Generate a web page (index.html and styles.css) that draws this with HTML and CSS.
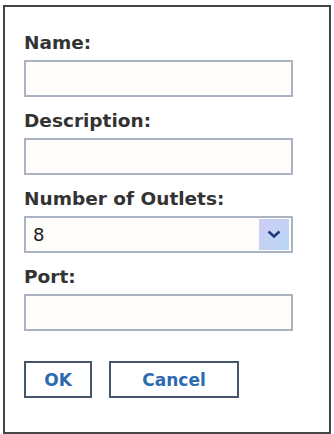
FILE: index.html
```html
<!DOCTYPE html>
<html lang="en">
<head>
    <meta charset="UTF-8">
    <meta name="viewport" content="width=device-width, initial-scale=1.0">
    <title>Outlet Properties</title>
    <link rel="stylesheet" href="styles.css">
</head>
<body>
    <div id="dialog">
        <div class="field">
            <label class="field-label" for="name">Name:</label>
            <input id="name" class="text-box" type="text">
        </div>
        <div class="field">
            <label class="field-label" for="description">Description:</label>
            <input id="description" class="text-box" type="text">
        </div>
        <div class="field">
            <label class="field-label" for="outlets">Number of Outlets:</label>
            <div id="outlets" class="select-box">
                <span class="select-value">8</span>
                <span class="select-arrow">
                    <svg width="14" height="9" viewBox="0 0 14 9">
                        <path d="M1.5 1.5 L7 6.5 L12.5 1.5" fill="none" stroke="#1f3c78" stroke-width="2.6"/>
                    </svg>
                </span>
            </div>
        </div>
        <div class="field">
            <label class="field-label" for="port">Port:</label>
            <input id="port" class="text-box" type="text">
        </div>
        <div id="buttons">
            <button class="btn btn-ok">OK</button>
            <button class="btn btn-cancel">Cancel</button>
        </div>
    </div>
</body>
</html>
```

FILE: styles.css
```css
:root{
    --frame-color: #454545;
    --label-color: #333333;
    --box-border: #a9b3c1;
    --button-border: #46566a;
    --button-text: #2e6ab0;
}
html,body {
    margin: 0;
    padding: 0;
    background-color: #ffffff;
    font-family: "DejaVu Sans", sans-serif;
}

/* ==========
    Frame
    ========= */
#dialog{
    box-sizing: border-box;
    width: 328px;
    height: 429px;
    margin: 5px 0 0 3px;
    border: 2px solid var(--frame-color);
    padding: 25px 0 0 19px;
    display: flex;
    flex-direction: column;
    gap: 13px;
}

/* ==========
    Fields
    ========= */
.field{
    display: flex;
    flex-direction: column;
    gap: 6px;
}
.field-label{
    font-size: 18.5px;
    font-weight: bold;
    line-height: 22px;
    color: var(--label-color);
}
.text-box, .select-box{
    box-sizing: border-box;
    width: 269px;
    height: 37px;
    margin: 0;
    border: 2px solid var(--box-border);
    background-color: #fffdfb;
}
.select-box{
    display: flex;
    align-items: center;
    justify-content: space-between;
    padding: 0 2px 0 7px;
}
.select-value{
    font-size: 18px;
    color: #1a1a1a;
}
.select-arrow{
    width: 30px;
    height: 31px;
    display: flex;
    align-items: center;
    justify-content: center;
    background: linear-gradient(135deg, #cfcdf4, #b9d6f6);
}

/* ==========
    Buttons
    ========= */
#buttons{
    display: flex;
    gap: 17px;
    margin-top: 17px;
}
.btn{
    height: 37px;
    border: 2px solid var(--button-border);
    background-color: #ffffff;
    color: var(--button-text);
    font-family: "DejaVu Sans", sans-serif;
    font-size: 17px;
    font-weight: bold;
    padding: 0;
}
.btn-ok{
    width: 68px;
}
.btn-cancel{
    width: 130px;
}
```
